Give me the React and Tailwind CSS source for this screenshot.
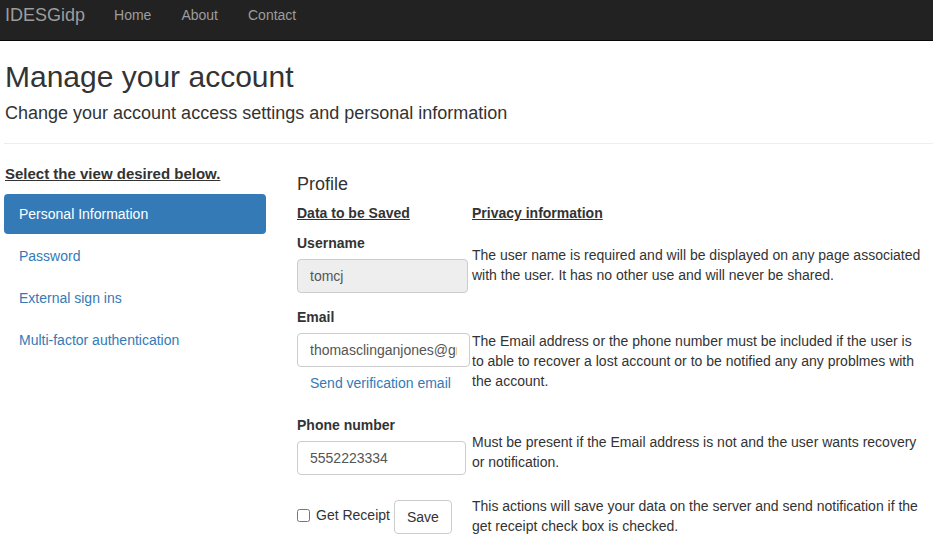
import React, { useState } from 'react';

const navLinks = ['Home', 'About', 'Contact'];
const views = ['Personal Information', 'Password', 'External sign ins', 'Multi-factor authentication'];

const App = () => {
  const [activeView, setActiveView] = useState('Personal Information');
  const [getReceipt, setGetReceipt] = useState(false);

  return (
    <div className="min-h-screen bg-white text-[14px] leading-[20px] text-[#333] font-['Liberation_Sans',Arial,sans-serif]">
      <nav className="h-[41px] bg-[#222] border-b border-[#080808] flex items-start">
        <a href="#" className="pl-[5px] pt-[5px] text-[18px] leading-[20px] text-[#9d9d9d]">IDESGidp</a>
        <ul className="flex ml-[14px]">
          {navLinks.map((link) => (
            <li key={link}>
              <a href="#" className="block px-[15px] pt-[5px] text-[#9d9d9d]">{link}</a>
            </li>
          ))}
        </ul>
      </nav>

      <div className="pl-[4px]">
        <h1 className="pl-[1px] mt-[19px] text-[30px] leading-[33px] font-normal">Manage your account</h1>
        <h4 className="pl-[1px] mt-[10px] text-[18px] leading-[20px]">Change your account access settings and personal information</h4>
        <hr className="mt-[20px] border-t border-[#eee]" />

        <div className="flex mt-[20px]">
          <div className="w-[262px]">
            <p className="pl-[1px] text-[15px] font-bold underline">Select the view desired below.</p>
            <ul className="mt-[10px]">
              {views.map((view) => (
                <li key={view} className="mt-[2px] first:mt-0">
                  <a
                    href="#"
                    onClick={(e) => { e.preventDefault(); setActiveView(view); }}
                    className={
                      activeView === view
                        ? 'block px-[15px] py-[10px] rounded-[4px] bg-[#337ab7] text-white'
                        : 'block px-[15px] py-[10px] rounded-[4px] text-[#337ab7]'
                    }
                  >
                    {view}
                  </a>
                </li>
              ))}
            </ul>
          </div>

          <div className="ml-[31px]">
            <h3 className="mt-[10px] text-[18px] leading-[20px]">Profile</h3>

            <div className="flex mt-[9px]">
              <div className="w-[175px] font-bold underline">Data to be Saved</div>
              <div className="font-bold underline">Privacy information</div>
            </div>

            <div className="flex mt-[10px]">
              <div className="w-[175px]">
                <label className="block font-bold">Username</label>
                <input
                  disabled
                  value="tomcj"
                  className="mt-[6px] w-[171px] h-[34px] px-[12px] border border-[#ccc] rounded-[4px] bg-[#eee] text-[#555]"
                />
              </div>
              <p className="w-[452px] mt-[12px]">
                The user name is required and will be displayed on any page associated with the user. It has no other use and will never be shared.
              </p>
            </div>

            <div className="flex mt-[14px]">
              <div className="w-[175px]">
                <label className="block font-bold">Email</label>
                <input
                  defaultValue="thomasclinganjones@gmail.com"
                  className="mt-[6px] w-[173px] h-[34px] px-[12px] border border-[#ccc] rounded-[4px] bg-white text-[#555]"
                />
                <a href="#" className="block mt-[6px] pl-[13px] text-[#337ab7]">Send verification email</a>
              </div>
              <p className="w-[452px] mt-[24px]">
                The Email address or the phone number must be included if the user is to able to recover a lost account or to be notified any any problmes with the account.
              </p>
            </div>

            <div className="flex mt-[22px]">
              <div className="w-[175px]">
                <label className="block font-bold">Phone number</label>
                <input
                  defaultValue="5552223334"
                  className="mt-[6px] w-[169px] h-[34px] px-[12px] border border-[#ccc] rounded-[4px] bg-white text-[#555]"
                />
              </div>
              <p className="w-[452px] mt-[17px]">
                Must be present if the Email address is not and the user wants recovery or notification.
              </p>
            </div>

            <div className="flex mt-[21px]">
              <div className="w-[175px] flex items-center mt-[4px] h-[34px]">
                <label className="flex items-center mb-[4px]">
                  <input
                    type="checkbox"
                    checked={getReceipt}
                    onChange={(e) => setGetReceipt(e.target.checked)}
                    className="w-[13px] h-[13px] m-0"
                  />
                  <span className="ml-[6px]">Get Receipt</span>
                </label>
                <button className="ml-[4px] w-[58px] h-[34px] border border-[#ccc] rounded-[4px] bg-white text-[#333]">Save</button>
              </div>
              <p className="w-[452px]">
                This actions will save your data on the server and send notification if the get receipt check box is checked.
              </p>
            </div>
          </div>
        </div>
      </div>
    </div>
  );
};

export default App;
